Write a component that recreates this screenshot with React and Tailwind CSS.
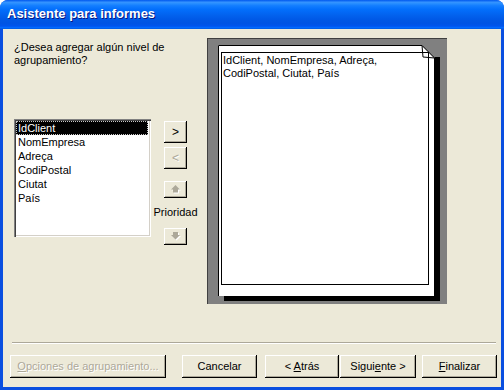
import React from "react";

const btn =
  "flex items-center justify-center bg-[#ece9d8] shadow-[inset_-1px_-1px_0_#000,inset_1px_1px_0_#fff,inset_-2px_-2px_0_#aca899]";
const disabledText = "text-[#aca899] [text-shadow:1px_1px_0_#fff]";

function Arrow({ down }) {
  const pts = down
    ? "2,0 7,0 7,3 9,3 4.5,7.5 0,3 2,3"
    : "4.5,0 9,4.5 7,4.5 7,7.5 2,7.5 2,4.5 0,4.5";
  return (
    <svg width="10" height="9" viewBox="0 0 10 9">
      <polygon points={pts} transform="translate(1,1)" fill="#fff" />
      <polygon points={pts} fill="#aca899" />
    </svg>
  );
}

export default function App() {
  const items = ["IdClient", "NomEmpresa", "Adreça", "CodiPostal", "Ciutat", "País"];
  return (
    <div className="w-[504px] h-[390px] flex flex-col bg-[#0a4fe0] rounded-t-[8px] overflow-hidden font-['Tahoma','Liberation_Sans',sans-serif] text-[11px] text-black">
      <div className="h-[29px] shrink-0 pl-[7px] pt-[6px] bg-[linear-gradient(to_bottom,#0058ee_0%,#3593ff_8%,#288eff_12%,#127dff_20%,#036ffc_32%,#0262ee_52%,#0057e5_70%,#0054e3_80%,#0055eb_88%,#005bf5_92%,#026afe_95%,#0062ef_98%,#0052d6_100%)]">
        <span className="text-white font-bold text-[13px] leading-[15px] [text-shadow:1px_1px_0_#0a1883]">
          Asistente para informes
        </span>
      </div>
      <div className="flex-1 mx-[3px] mb-[3px] bg-[#ece9d8] flex flex-col">
        <div className="flex pt-[9px] pl-[11px]">
          <div className="w-[137px] flex flex-col">
            <div className="mt-[3px] leading-[13px] whitespace-nowrap">
              ¿Desea agregar algún nivel de
              <br />
              agrupamiento?
            </div>
            <div className="mt-[52px] h-[118px] bg-white p-[2px] shadow-[inset_1px_1px_0_#808080,inset_2px_2px_0_#404040,inset_-1px_-1px_0_#fff,inset_-2px_-2px_0_#d4d0c8]">
              {items.map((it, i) => (
                <div
                  key={it}
                  className={
                    "h-[14px] leading-[14px] pl-[2px] " +
                    (i === 0
                      ? "bg-black text-white outline outline-1 outline-dotted outline-[#c8c8c8] -outline-offset-1 mr-[1px]"
                      : "")
                  }
                >
                  {it}
                </div>
              ))}
            </div>
          </div>
          <div className="ml-[13px] w-[23px] flex flex-col items-center">
            <div className={btn + " mt-[83px] w-[23px] h-[22px] text-[12px]"}>&gt;</div>
            <div className={btn + " mt-[4px] w-[23px] h-[22px] text-[12px] " + disabledText}>&lt;</div>
            <div className={btn + " mt-[12px] w-[23px] h-[17px]"}>
              <Arrow />
            </div>
            <div className="mt-[7px] leading-[14px] whitespace-nowrap">Prioridad</div>
            <div className={btn + " mt-[9px] w-[23px] h-[17px]"}>
              <Arrow down />
            </div>
          </div>
          <div className="ml-[20px] w-[240px] h-[266px] bg-[#808080] border-t border-l border-[#404040] border-r-white border-b-white pl-[10px] pt-[6px]">
            <div className="relative w-[222px] h-[256px]">
              <svg className="absolute inset-0" width="222" height="256" viewBox="0 0 222 256">
                <rect x="217" y="12" width="5" height="244" fill="#000" />
                <rect x="6" y="251" width="216" height="5" fill="#000" />
                <polygon points="0,0 204,0 217,13 217,251 0,251" fill="#fff" />
                <polyline points="0.5,251 0.5,0.5 204,0.5 216.5,13 216.5,251" fill="none" stroke="#000" strokeWidth="1" />
                <polygon points="204,0.5 205,12 216.5,13" fill="#fff" stroke="#000" strokeWidth="1" strokeLinejoin="round" />
                <rect x="3.5" y="7.5" width="207" height="232" fill="none" stroke="#000" strokeWidth="1" />
              </svg>
              <div className="relative pl-[5px] pt-[9px] leading-[13px]">
                IdClient, NomEmpresa, Adreça,
                <br />
                CodiPostal, Ciutat, País
              </div>
            </div>
          </div>
        </div>
        <div className="mt-[38px] ml-[9px] w-[484px] h-[2px] border-t border-[#aca899] border-b border-b-white" />
        <div className="mt-[11px] flex">
          <div className={btn + " ml-[7px] w-[156px] h-[23px] " + disabledText}>
            <span>
              <span className="underline">O</span>pciones de agrupamiento...
            </span>
          </div>
          <div className={btn + " ml-[16px] w-[75px] h-[23px]"}>Cancelar</div>
          <div className={btn + " ml-[8px] w-[74px] h-[23px]"}>
            <span>
              &lt; <span className="underline">A</span>trás
            </span>
          </div>
          <div className={btn + " ml-[1px] w-[76px] h-[23px]"}>
            <span>
              Sigui<span className="underline">e</span>nte &gt;
            </span>
          </div>
          <div className={btn + " ml-[6px] w-[75px] h-[23px]"}>
            <span>
              <span className="underline">F</span>inalizar
            </span>
          </div>
        </div>
      </div>
    </div>
  );
}
